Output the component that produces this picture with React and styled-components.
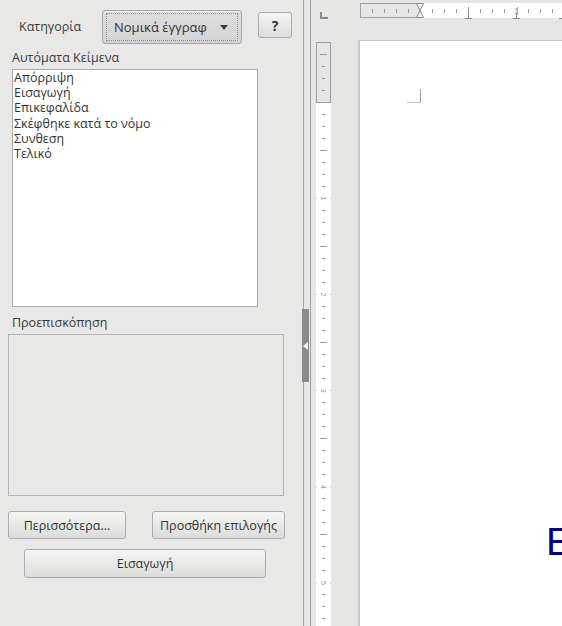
import React from "react";
import styled, { createGlobalStyle } from "styled-components";

const GlobalStyle = createGlobalStyle`
    html, body {
        margin: 0;
        padding: 0;
        height: 626px;
        overflow: hidden;
        background: #e8e8e7;
    }
    * { box-sizing: border-box; }
`;

const items = [
    "Απόρριψη",
    "Εισαγωγή",
    "Επικεφαλίδα",
    "Σκέφθηκε κατά το νόμο",
    "Συνθεση",
    "Τελικό",
];

function HRuler() {
    const ticks = [];
    for (let i = -4; i <= 11; i++) {
        if (i === 0 || i === 8) continue;
        const x = 60 + i * 12;
        const long = i === 4;
        ticks.push(
            <line key={i} x1={x + 0.5} x2={x + 0.5} y1={long ? 4 : 6} y2={long ? 12 : 10} stroke="#9a9a9a" strokeWidth="1" />
        );
    }
    return (
        <svg width="203" height="17" viewBox="0 0 203 17">
            <rect x="0.5" y="0.5" width="60" height="14" fill="none" stroke="#a0a0a0" />
            <rect x="60" y="0" width="143" height="15" fill="#fff" />
            {ticks}
            <path d="M56.5 0.5h7l-3.5 7l3.5 7h-7l3.5-7z" fill="#f0f0f0" stroke="#8a8a8a" />
            <path d="M108.5 10v5.5M105 15.5h7" stroke="#8a8a8a" fill="none" />
            <path d="M156.5 10v5.5M153 15.5h7" stroke="#8a8a8a" fill="none" />
            <path d="M202.5 10v5.5M199 15.5h4" stroke="#8a8a8a" fill="none" />
            <text x="156.5" y="11" fontSize="9" fill="#9a9a9a" textAnchor="middle" fontFamily="Liberation Sans, sans-serif">1</text>
            <rect x="157" y="4" width="1" height="8" fill="#8fc1ef" />
        </svg>
    );
}

function VRuler() {
    const ticks = [];
    const zero = 60;
    for (let i = -4; i <= 44; i++) {
        if (i === 0 || i % 8 === 0) continue;
        const y = zero + i * 12;
        const long = Math.abs(i % 8) === 4;
        ticks.push(
            <line key={i} x1={long ? 4 : 6} x2={long ? 11 : 9} y1={y + 0.5} y2={y + 0.5} stroke="#9a9a9a" />
        );
    }
    const nums = [1, 2, 3, 4, 5].map((n) => {
        const y = zero + n * 96.2;
        return (
            <g key={n}>
                <circle cx="0.5" cy={y} r="0.5" fill="#aaa" />
                <circle cx="14.5" cy={y} r="0.5" fill="#aaa" />
                <text
                    x="7.5"
                    y={y}
                    fontSize="8"
                    fill="#9a9aa6"
                    textAnchor="middle"
                    dominantBaseline="middle"
                    transform={`rotate(90 7.5 ${y})`}
                    fontFamily="Liberation Sans, sans-serif"
                >
                    {n}
                </text>
            </g>
        );
    });
    return (
        <svg width="15" height="590" viewBox="0 0 15 590">
            <rect x="0" y="60" width="15" height="530" fill="#fff" />
            <rect x="0.5" y="0.5" width="14" height="60" fill="none" stroke="#a0a0a0" />
            {ticks}
            {nums}
        </svg>
    );
}

function App() {
    return (
        <>
            <GlobalStyle />
            <Window>
                <Sidebar>
                    <CategoryRow>
                        <CategoryLabel>Κατηγορία</CategoryLabel>
                        <Dropdown>
                            <Focus>
                                <span>Νομικά έγγραφ</span>
                                <Arrow />
                            </Focus>
                        </Dropdown>
                        <HelpButton>?</HelpButton>
                    </CategoryRow>
                    <Label>Αυτόματα Κείμενα</Label>
                    <ListBox>
                        {items.map((t) => (
                            <ListItem key={t}>{t}</ListItem>
                        ))}
                    </ListBox>
                    <Label>Προεπισκόπηση</Label>
                    <Preview />
                    <ButtonRow>
                        <Button $w="118px">Περισσότερα...</Button>
                        <Button $w="133px">Προσθήκη επιλογής</Button>
                    </ButtonRow>
                    <InsertRow>
                        <Button $w="242px" $h="29px">Εισαγωγή</Button>
                    </InsertRow>
                </Sidebar>
                <Splitter>
                    <Handle>
                        <svg width="5" height="8" viewBox="0 0 5 8">
                            <path d="M0 4L5 0v8z" fill="#f2f2f2" />
                        </svg>
                    </Handle>
                </Splitter>
                <Workspace>
                    <Corner>
                        <svg width="8" height="8" viewBox="0 0 8 8">
                            <path d="M0 0h2v5h6v2H0z" fill="#8a8a8a" />
                        </svg>
                    </Corner>
                    <TopRuler>
                        <HRuler />
                    </TopRuler>
                    <SideRuler>
                        <VRuler />
                    </SideRuler>
                    <Page>
                        <MarginMark />
                        <BigText>E</BigText>
                    </Page>
                </Workspace>
            </Window>
        </>
    );
}

export default App;

const Window = styled.div`
    display: flex;
    width: 562px;
    height: 626px;
    overflow: hidden;
    background: #e8e8e7;
    font-family: "Open Sans", "Noto Sans", sans-serif;
    font-size: 12.5px;
    color: #3a3a3a;
`;
const Sidebar = styled.div`
    width: 302px;
    flex-shrink: 0;
    display: flex;
    flex-direction: column;
    padding: 10px 0 0 0;
`;
const CategoryRow = styled.div`
    display: flex;
    align-items: flex-start;
    height: 34px;
`;
const CategoryLabel = styled.div`
    width: 102px;
    padding-left: 19px;
    line-height: 34px;
`;
const Dropdown = styled.div`
    width: 140px;
    height: 34px;
    border: 1px solid #a6a6a6;
    border-radius: 3px;
    background: linear-gradient(#dedede, #d4d4d4);
    padding: 2px 3px;
    box-shadow: inset 0 1px 0 rgba(255, 255, 255, 0.4);
`;
const Focus = styled.div`
    height: 100%;
    border: 1px dotted #8a8a8a;
    display: flex;
    align-items: center;
    justify-content: space-between;
    padding: 0 9px 0 7px;
    color: #333;
    font-size: 13px;
`;
const Arrow = styled.span`
    width: 0;
    height: 0;
    border-left: 4px solid transparent;
    border-right: 4px solid transparent;
    border-top: 5px solid #3a3a3a;
`;
const HelpButton = styled.div`
    margin: 2px 0 0 16px;
    width: 34px;
    height: 26px;
    border: 1px solid #acacac;
    border-radius: 3px;
    background: linear-gradient(#f5f5f4, #dcdcdb);
    display: flex;
    align-items: center;
    justify-content: center;
    font-weight: bold;
    font-size: 14px;
    color: #333;
`;
const Label = styled.div`
    padding-left: 12px;
    line-height: 15px;
    margin-top: 6px;
    height: 19px;
`;
const ListBox = styled.div`
    margin-left: 12px;
    width: 246px;
    height: 238px;
    background: #fff;
    border: 1px solid #aaaaaa;
    padding: 0 0 0 1px;
    margin-bottom: 2px;
`;
const ListItem = styled.div`
    line-height: 15.2px;
    color: #333;
`;
const Preview = styled.div`
    margin-left: 8px;
    width: 276px;
    height: 162px;
    border: 1px solid #b4b4b4;
`;
const ButtonRow = styled.div`
    display: flex;
    gap: 26px;
    padding-left: 8px;
    margin-top: 15px;
`;
const InsertRow = styled.div`
    padding-left: 24px;
    margin-top: 10px;
`;
const Button = styled.div`
    width: ${(p) => p.$w};
    height: ${(p) => p.$h || "28px"};
    border: 1px solid #acacac;
    border-radius: 3px;
    background: linear-gradient(#f5f5f4, #dcdcdb);
    display: flex;
    align-items: center;
    justify-content: center;
    color: #333;
    white-space: nowrap;
`;
const Splitter = styled.div`
    width: 8px;
    flex-shrink: 0;
    border-left: 1px solid #a2a2a2;
    border-right: 1px solid #a2a2a2;
    padding-top: 309px;
    margin-left: 1px;
`;
const Handle = styled.div`
    width: 7px;
    margin-left: -2px;
    height: 73px;
    background: #8a8c8c;
    display: flex;
    align-items: center;
    justify-content: center;
`;
const Workspace = styled.div`
    flex: 1;
    display: grid;
    grid-template-columns: 48px 1fr;
    grid-template-rows: 40px 1fr;
    background: #e6e6e5;
    overflow: hidden;
`;
const Corner = styled.div`
    padding: 7px 0 0 9px;
`;
const TopRuler = styled.div`
    padding-top: 3px;
    padding-left: 1px;
`;
const SideRuler = styled.div`
    padding: 2px 0 0 5px;
    box-shadow: inset -2px 0 2px -1px rgba(0, 0, 0, 0.12);
`;
const Page = styled.div`
    position: relative;
    background: #fff;
    border-left: 1px solid #c4c4c4;
    border-top: 1px solid #c4c4c4;
    padding: 481px 0 0 186px;
`;
const MarginMark = styled.div`
    position: absolute;
    left: 47px;
    top: 48px;
    width: 14px;
    height: 14px;
    border-right: 1px solid #9a9a9a;
    border-bottom: 1px solid #c8c8c8;
`;
const BigText = styled.div`
    font-family: "Liberation Sans", sans-serif;
    font-size: 39px;
    line-height: 39px;
    color: #000080;
`;
